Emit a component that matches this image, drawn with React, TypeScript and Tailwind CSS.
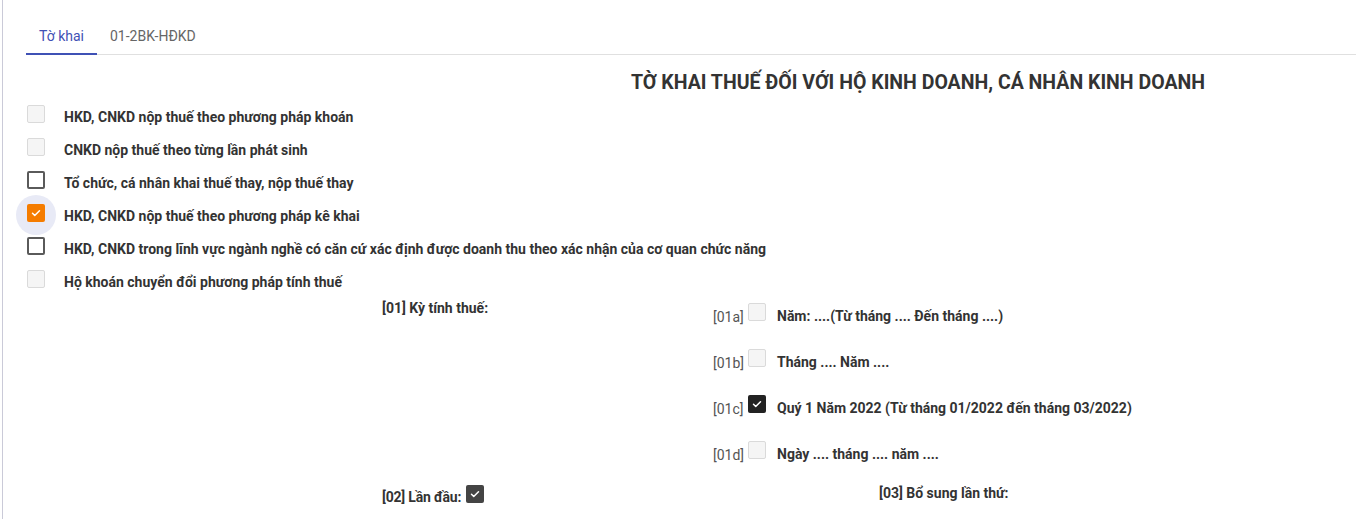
import React from "react";

type BoxKind = "disabled" | "empty" | "orange" | "dark";

function Check({ size = 12 }: { size?: number }) {
  return (
    <svg width={size} height={size} viewBox="0 0 24 24" fill="none">
      <path d="M5 12.5l4.5 4.5L19 7.5" stroke="#fff" strokeWidth="3" strokeLinecap="round" strokeLinejoin="round" />
    </svg>
  );
}

function Box({ kind, muted }: { kind: BoxKind; muted?: boolean }) {
  const size = "w-[18px] h-[18px]";
  if (kind === "disabled")
    return <div className={`${size} shrink-0 rounded-[2px] border-[1.5px] border-[#dadada] bg-[#f5f5f5]`} />;
  if (kind === "empty")
    return <div className={`${size} shrink-0 rounded-[2px] border-2 border-[#5a5a5a] bg-white`} />;
  if (kind === "orange")
    return (
      <div className={`${size} shrink-0 rounded-[2px] bg-[#f57c00] flex items-center justify-center`}>
        <Check />
      </div>
    );
  return (
    <div className={`${size} shrink-0 rounded-[2px] ${muted ? "bg-[#444]" : "bg-[#222]"} flex items-center justify-center`}>
      <Check />
    </div>
  );
}

const OPTIONS: { label: string; kind: BoxKind }[] = [
  { label: "HKD, CNKD nộp thuế theo phương pháp khoán", kind: "disabled" },
  { label: "CNKD nộp thuế theo từng lần phát sinh", kind: "disabled" },
  { label: "Tổ chức, cá nhân khai thuế thay, nộp thuế thay", kind: "empty" },
  { label: "HKD, CNKD nộp thuế theo phương pháp kê khai", kind: "orange" },
  { label: "HKD, CNKD trong lĩnh vực ngành nghề có căn cứ xác định được doanh thu theo xác nhận của cơ quan chức năng", kind: "empty" },
  { label: "Hộ khoán chuyển đổi phương pháp tính thuế", kind: "disabled" },
];

const PERIODS: { code: string; label: string; kind: BoxKind }[] = [
  { code: "[01a]", label: "Năm: ....(Từ tháng .... Đến tháng ....)", kind: "disabled" },
  { code: "[01b]", label: "Tháng .... Năm ....", kind: "disabled" },
  { code: "[01c]", label: "Quý 1 Năm 2022 (Từ tháng 01/2022 đến tháng 03/2022)", kind: "dark" },
  { code: "[01d]", label: "Ngày .... tháng .... năm ....", kind: "disabled" },
];

export default function App() {
  return (
    <div className="w-[1356px] h-[519px] overflow-hidden bg-white font-['Roboto',sans-serif] text-[14px] text-[#333]">
      <div className="ml-[2px] h-full border-l border-[#cacad8]">
        {/* Tabs */}
        <div className="ml-[23px] flex h-[55px] border-b border-[#e0e0e0]">
          <div className="px-[13px] pt-[26px] pb-[7px] leading-5 text-[#3f51b5] border-b-2 border-[#3f51b5] -mb-px">
            Tờ khai
          </div>
          <div className="px-[13px] pt-[26px] pb-[7px] leading-5 text-[#666]">01-2BK-HĐKD</div>
        </div>

        {/* Title */}
        <div className="pl-[477px] pt-[16px] text-center text-[19.5px] leading-6 font-bold text-[#333]">
          TỜ KHAI THUẾ ĐỐI VỚI HỘ KINH DOANH, CÁ NHÂN KINH DOANH
        </div>

        {/* Taxpayer type */}
        <div className="pl-[24px] pt-[10px] flex flex-col gap-[15px]">
          {OPTIONS.map((o) => (
            <div key={o.label} className="flex items-start h-[18px]">
              <div className="relative w-[18px] h-[18px] shrink-0">
                {o.kind === "orange" && (
                  <div className="absolute left-[-11px] top-[-9px] w-[40px] h-[40px] rounded-full bg-[#e8eaf6]" />
                )}
                <div className="relative">
                  <Box kind={o.kind} />
                </div>
              </div>
              <div className="ml-[19px] mt-[2px] leading-5 font-bold whitespace-nowrap">{o.label}</div>
            </div>
          ))}
        </div>

        {/* [01] */}
        <div className="pl-[379px] pt-[10px] flex">
          <div className="w-[331px] leading-5 font-bold">[01] Kỳ tính thuế:</div>
          <div className="pt-[5px] flex flex-col gap-[28px]">
            {PERIODS.map((p) => (
              <div key={p.code} className="flex items-start h-[18px]">
                <div className="w-[35px] mt-[4px] leading-5 text-[#555]">{p.code}</div>
                <Box kind={p.kind} />
                <div className="ml-[11px] mt-[3px] leading-5 font-bold whitespace-nowrap">{p.label}</div>
              </div>
            ))}
          </div>
        </div>

        {/* [02] / [03] */}
        <div className="pl-[379px] pt-[22px] flex">
          <div className="w-[497px] flex items-center">
            <span className="mt-[6px] leading-5 font-bold tracking-[-0.2px]">[02] Lần đầu:</span>
            <span className="ml-[5px]">
              <Box kind="dark" muted />
            </span>
          </div>
          <div className="mt-[2px] leading-5 font-bold">[03] Bổ sung lần thứ:</div>
        </div>
      </div>
    </div>
  );
}
